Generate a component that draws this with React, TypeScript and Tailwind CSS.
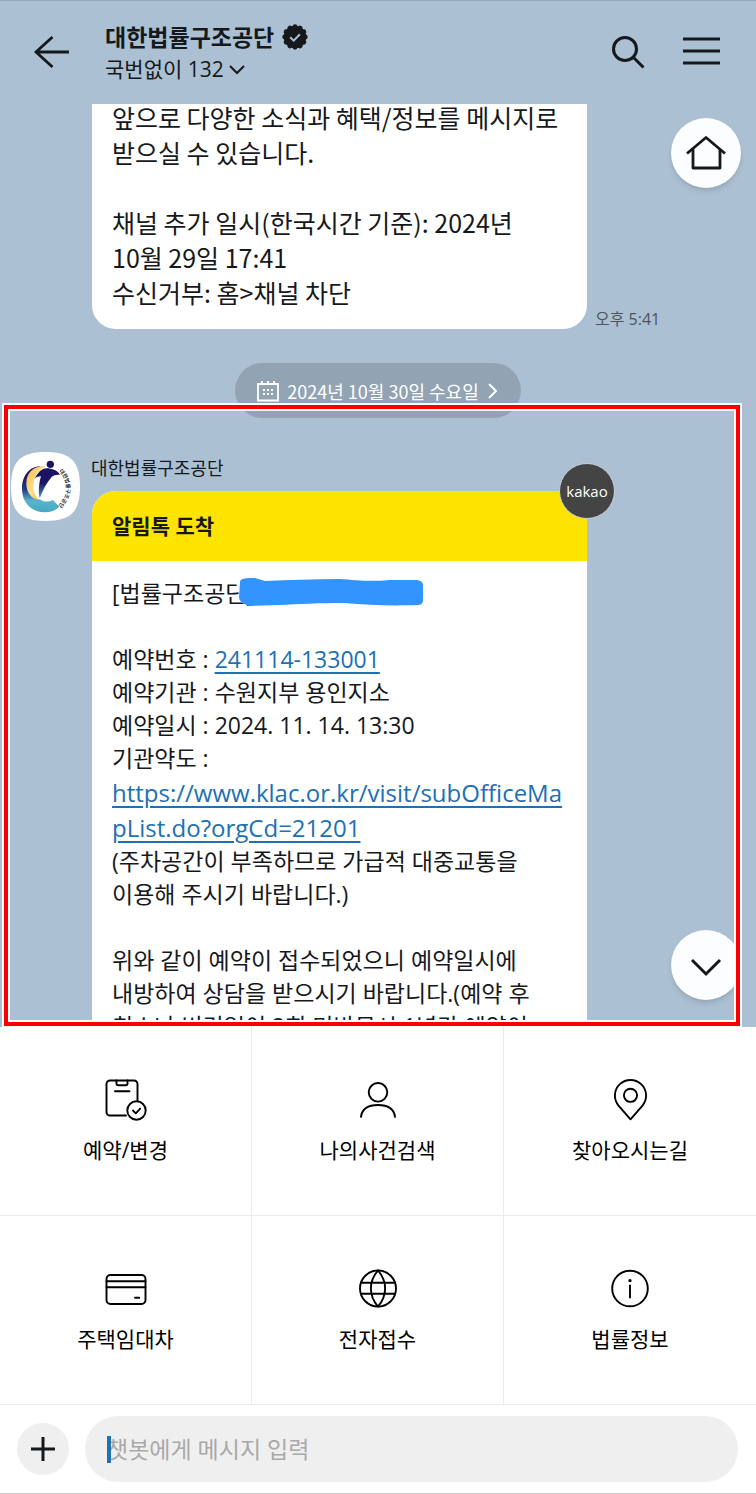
import { useState } from "react";

const BODY_LINES = [
    { label: "예약번호", value: "241114-133001", href: "tel:241114133001" },
    { label: "예약기관", value: "수원지부 용인지소" },
    { label: "예약일시", value: "2024. 11. 14. 13:30" },
    { label: "기관약도", value: "" }
];

const MENU = [
    { id: "reserve", name: "예약/변경", icon: <ReserveIcon /> },
    { id: "case", name: "나의사건검색", icon: <PersonIcon /> },
    { id: "map", name: "찾아오시는길", icon: <PinIcon /> },
    { id: "lease", name: "주택임대차", icon: <CardIcon /> },
    { id: "file", name: "전자접수", icon: <GlobeIcon /> },
    { id: "info", name: "법률정보", icon: <InfoIcon /> }
];

const LINE = {
    fill: "none",
    stroke: "currentColor",
    strokeWidth: 1.9,
    strokeLinecap: "round",
    strokeLinejoin: "round"
} as const;

function ReserveIcon() {
    return (
        <svg viewBox="0 0 44 44" className="size-11" {...LINE}>
            <path d="M22 37.5H6A3.5 3.5 0 0 1 2.5 34V6A3.5 3.5 0 0 1 6 2.5h24A3.5 3.5 0 0 1 33.500 6v16.500" />
            <path d="M12.500 2.500v3.200a1.500 1.500 0 0 0 1.500 1.500h8a1.500 1.500 0 0 0 1.500-1.500V2.500M11 13.300h14.500" />
            <circle cx="32.500" cy="32.500" r="9.200" />
            <path d="m29 32.500 2.800 2.800 4.400-4.600" />
        </svg>
    );
}

function PersonIcon() {
    return (
        <svg viewBox="0 0 44 44" className="size-11" {...LINE}>
            <circle cx="22" cy="14.300" r="9.300" />
            <path d="M5 38.800C6 31 12.500 27 22 27s16 4 17 11.800" />
        </svg>
    );
}

function PinIcon() {
    return (
        <svg viewBox="0 0 44 44" className="size-11" {...LINE}>
            <path d="M22.500 41.300 10.300 27.300A15.600 15.600 0 1 1 34.700 27.300Z" />
            <circle cx="22.500" cy="17.300" r="6.600" />
        </svg>
    );
}

function CardIcon() {
    return (
        <svg viewBox="0 0 44 44" className="size-11" {...LINE}>
            <rect x="2.500" y="8" width="39" height="29" rx="4" />
            <path d="M2.500 14.300h39M2.500 20.300h39M31 30.700h4.200" />
        </svg>
    );
}

function GlobeIcon() {
    return (
        <svg viewBox="0 0 44 44" className="size-11" {...LINE}>
            <circle cx="22" cy="21.500" r="18" />
            <path d="M22 3.500c-9.500 11-9.500 25 0 36M22 3.500c9.500 11 9.500 25 0 36M5 15.700h34M5 26.700h34" />
        </svg>
    );
}

function InfoIcon() {
    return (
        <svg viewBox="0 0 44 44" className="size-11" {...LINE}>
            <circle cx="22" cy="21.500" r="17.800" />
            <path d="M22 18.500v12" />
            <circle cx="22" cy="13.600" r="0.700" fill="currentColor" />
        </svg>
    );
}

function VerifiedBadge() {
    return (
        <svg viewBox="-13 -13 26 26" className="size-[26px]" fill="currentColor">
            <circle r="11.300" />
            {Array.from({ length: 12 }, (_, i) => (
                <circle key={i} cx="10.300" r="2.400" transform={`rotate(${i * 30})`} />
            ))}
            <path d="m-4.800 0.200 3.500 3.400 6.200-6.400" fill="none" stroke="#abc0d2" strokeWidth="2" />
        </svg>
    );
}

function ChannelLogo() {
    return (
        <svg viewBox="36 66 207 207" className="size-[69px]">
            <defs>
                <linearGradient id="ring" x1="0" y1="0" x2="0" y2="1">
                    <stop offset="0.200" stopColor="#1b1464" />
                    <stop offset="0.500" stopColor="#223a86" />
                    <stop offset="0.750" stopColor="#58b5cc" />
                    <stop offset="1" stopColor="#45a9c3" />
                </linearGradient>
                <linearGradient id="moon" x1="0" y1="0" x2="1" y2="1">
                    <stop offset="0" stopColor="#f7b84a" />
                    <stop offset="0.500" stopColor="#fbe08c" />
                    <stop offset="1" stopColor="#f2a431" />
                </linearGradient>
                <linearGradient id="body" x1="0" y1="0" x2="0" y2="1">
                    <stop offset="0.500" stopColor="#1b1464" />
                    <stop offset="1" stopColor="#4aa3c4" />
                </linearGradient>
                <path id="arc" d="M180 123Q224 172 180 226" />
            </defs>
            <path d="M139 66C215 66 243 94 243 170S215 273 139 273 36 245 36 170 64 66 139 66Z" fill="#fff" />
            <path d="M126 109C92 108 69 137 69 176 69 218 98 247 137 247 156 247 172 240 181 230L162 210C150 216 137 216 126 210 98 202 88 180 90 155 92 134 106 117 126 109Z" fill="url(#ring)" />
            <path d="M142 110C108 104 82 126 82 160 82 190 99 207 120 211 106 196 100 176 105 154 107 136 120 116 142 110Z" fill="url(#moon)" />
            <circle cx="154" cy="103" r="11" fill="#1b1464" />
            <path d="M107 146C117 125 131 112 148 115 163 118 178 122 183 135 174 133 165 135 158 141 143 157 132 180 122 205 118 188 119 161 126 139 118 139 112 141 107 146Z" fill="url(#body)" />
            <text className="font-bold" fontSize="16" fill="#26262c">
                <textPath href="#arc">대한법률구조공단</textPath>
            </text>
        </svg>
    );
}

function Header() {
    return (
        <header className="relative z-10 flex h-[104px] shrink-0 items-start border-t border-[#93a8ba] bg-[#abc0d2] pl-[31px] pr-[34px]">
            <button type="button" aria-label="뒤로" className="mt-[31px]">
                <svg viewBox="0 0 40 40" className="size-10" fill="none" stroke="currentColor" strokeWidth="2.800">
                    <path d="M38 20H5M21.500 5 5 20l16.500 15" />
                </svg>
            </button>
            <div className="ml-[34px] mt-5 flex-1">
                <h1 className="flex items-center gap-2 text-[23px] leading-8 font-bold">
                    대한법률구조공단
                    <VerifiedBadge />
                </h1>
                <button type="button" className="flex items-center gap-1 text-[21px] leading-8">
                    국번없이 132
                    <svg viewBox="0 0 18 18" className="size-[18px]" fill="none" stroke="currentColor" strokeWidth="2">
                        <path d="m2 6 7 7 7-7" />
                    </svg>
                </button>
            </div>
            <button type="button" aria-label="검색" className="mt-[31px]">
                <svg viewBox="0 0 40 40" className="size-10" fill="none" stroke="currentColor" strokeWidth="3">
                    <circle cx="17" cy="17" r="11.500" />
                    <path d="m25.500 25.500 10 10" />
                </svg>
            </button>
            <button type="button" aria-label="메뉴" className="ml-[34px] mt-[30px]">
                <svg viewBox="0 0 40 40" className="size-10" fill="none" stroke="currentColor" strokeWidth="3">
                    <path d="M1 8h37M1 20h37M1 32h37" />
                </svg>
            </button>
        </header>
    );
}

function DatePill() {
    return (
        <button
            type="button"
            className="-mb-[15px] mt-[34px] flex h-[55px] items-center gap-2 self-center rounded-[28px] bg-[#92a4b3] px-[22px] font-['Noto_Sans_CJK_KR',sans-serif] text-lg text-white"
        >
            <svg viewBox="0 0 22 22" className="size-[22px]" fill="none" stroke="currentColor" strokeWidth="1.800">
                <path d="M1 4h20v16.500H1zM5 1v3M11 1v3M17 1v3" />
                <path d="M6 10h2M10 10h2M14 10h2M6 14h2M10 14h2M14 14h2" />
            </svg>
            2024년 10월 30일 수요일
            <svg viewBox="0 0 12 18" className="h-[18px] w-3" fill="none" stroke="currentColor" strokeWidth="2">
                <path d="m2 2 7 7-7 7" />
            </svg>
        </button>
    );
}

function AlimtalkMessage() {
    return (
        <article className="flex items-start pl-px pt-[41px]">
            <ChannelLogo />
            <div className="ml-3 w-[495px]">
                <h2 className="-ml-px text-lg leading-8">대한법률구조공단</h2>
                <div className="relative mt-[7px] rounded-t-[24px] bg-white">
                    <span className="absolute -right-7 -top-7 flex size-14 items-center justify-center rounded-full border border-[#c8d2da] bg-[#444] text-[15px] text-white">
                        kakao
                    </span>
                    <h3 className="h-[70px] rounded-t-[24px] bg-[#ffe400] px-5 text-[21px] leading-[70px] font-bold">
                        알림톡 도착
                    </h3>
                    <div className="px-5 pt-4 text-[23px] leading-[33px] whitespace-nowrap [font-variant-ligatures:none]">
                        <p className="relative mb-[33px]">
                            [법률구조공단]
                            <svg viewBox="0 0 184 30" className="absolute left-[127px] top-0 h-[30px] w-[184px]" fill="#3294ff">
                                <path d="M1 5C1 1 8 1 16 1L26 4C50 3 75 2 100 2 118 3 130 5 150 3L178 3Q184 4 184 8V23Q184 28 179 28C150 29 130 28 105 26 80 26 60 27 40 28L10 29Q0 26 0 20Z" />
                            </svg>
                        </p>
                        {BODY_LINES.map((line) => (
                            <p key={line.label}>
                                {line.label} :{" "}
                                {line.href ? (
                                    <a href={line.href} className="text-[#2070b4] underline underline-offset-4">
                                        {line.value}
                                    </a>
                                ) : (
                                    line.value
                                )}
                            </p>
                        ))}
                        <a
                            href="https://www.klac.or.kr/visit/subOfficeMapList.do?orgCd=21201"
                            className="block text-2xl leading-[35px] text-[#2070b4] underline underline-offset-4"
                        >
                            https://www.klac.or.kr/visit/subOfficeMa
                            <br />
                            pList.do?orgCd=21201
                        </a>
                        <p className="mb-[33px]">
                            (주차공간이 부족하므로 가급적 대중교통을
                            <br />
                            이용해 주시기 바랍니다.)
                        </p>
                        <p>
                            위와 같이 예약이 접수되었으니 예약일시에
                            <br />
                            내방하여 상담을 받으시기 바랍니다.(예약 후
                            <br />
                            취소나 변경없이 2회 미방문시 1년간 예약이
                        </p>
                    </div>
                </div>
            </div>
        </article>
    );
}

export default function App() {
    const [message, setMessage] = useState("");

    return (
        <div className="flex h-screen flex-col bg-[#abc0d2] font-['Open_Sans','Noto_Sans_CJK_KR',sans-serif] text-[#16191c]">
            <Header />

            <main className="relative flex min-h-0 flex-1 flex-col overflow-hidden">
                <div className="-mt-1 flex items-end gap-2 pl-[92px]">
                    <p className="w-[495px] rounded-b-[24px] bg-white px-5 pb-[19px] font-['Noto_Sans_CJK_KR',sans-serif] text-[25px] leading-[35px]">
                        앞으로 다양한 소식과 혜택/정보를 메시지로
                        <br />
                        받으실 수 있습니다.
                        <br />
                        <br />
                        채널 추가 일시(한국시간 기준): 2024년
                        <br />
                        10월 29일 17:41
                        <br />
                        수신거부: 홈&gt;채널 차단
                    </p>
                    <time className="text-base leading-5 text-[#4a5660]">오후 5:41</time>
                </div>

                <DatePill />

                {/* highlighted area */}
                <section className="-mb-px ml-[2px] mr-[14px] flex min-h-0 flex-1 border-2 border-white">
                    <div className="flex min-w-0 flex-1 border-4 border-[#fa0000]">
                        <div className="relative min-w-0 flex-1 overflow-hidden border-2 border-white">
                            <AlimtalkMessage />
                            <button
                                type="button"
                                aria-label="맨 아래로"
                                className="absolute -right-[7px] bottom-5 flex size-[70px] items-center justify-center rounded-full bg-[#fcfdff] shadow-md"
                            >
                                <svg viewBox="0 0 40 40" className="size-10" fill="none" stroke="currentColor" strokeWidth="3">
                                    <path d="m6 15 14 14 14-14" />
                                </svg>
                            </button>
                        </div>
                    </div>
                </section>

                <button
                    type="button"
                    aria-label="홈"
                    className="absolute right-[15px] top-[14px] flex size-[70px] items-center justify-center rounded-full bg-[#fcfdff] shadow-md"
                >
                    <svg viewBox="0 0 44 44" className="size-11" fill="none" stroke="currentColor" strokeWidth="2.800" strokeLinejoin="round">
                        <path d="M3 22.500 22 6.500l19 16" />
                        <path d="M9 18v19h27V18" />
                    </svg>
                </button>
            </main>

            <nav className="grid shrink-0 grid-cols-3 bg-white text-black">
                {MENU.map((item) => (
                    <button
                        key={item.id}
                        type="button"
                        className="flex h-[189px] flex-col items-center border-b border-r border-[#ebebeb] pt-[51px] text-[21px] leading-8 nth-[3n]:border-r-0"
                    >
                        {item.icon}
                        <span className="mt-3">{item.name}</span>
                    </button>
                ))}
            </nav>

            <form
                className="flex shrink-0 items-center gap-4 border-b border-[#c8c8c8] bg-white py-[11px] pl-[17px] pr-[18px]"
                onSubmit={(e) => e.preventDefault()}
            >
                <button
                    type="button"
                    aria-label="추가"
                    className="flex size-[52px] shrink-0 items-center justify-center rounded-full bg-[#efefef]"
                >
                    <svg viewBox="0 0 26 26" className="size-[26px]" fill="none" stroke="currentColor" strokeWidth="3">
                        <path d="M13 1v24M1 13h24" />
                    </svg>
                </button>
                <div className="relative flex-1">
                    <input
                        type="text"
                        aria-label="메시지"
                        value={message}
                        onChange={(e) => setMessage(e.target.value)}
                        placeholder="챗봇에게 메시지 입력"
                        className="h-[66px] w-full rounded-full bg-[#efefef] px-[22px] text-[23px] outline-none placeholder:text-[#a9a9a9]"
                    />
                    <span className="absolute left-[22px] top-5 h-[27px] w-1 bg-[#2070b4]" />
                </div>
            </form>
        </div>
    );
}
